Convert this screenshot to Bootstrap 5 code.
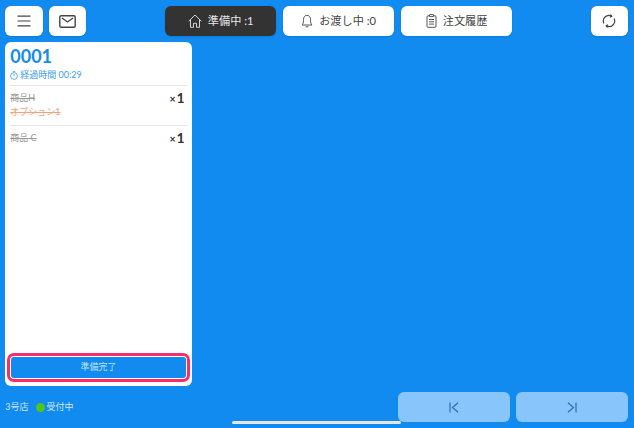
<!DOCTYPE html>
<html lang="ja">
<head>
<meta charset="utf-8">
<title>準備中</title>
<link href="https://cdn.jsdelivr.net/npm/bootstrap@5.3.0/dist/css/bootstrap.min.css" rel="stylesheet">
<style>
html,body{height:100%;}
body{background:#118bef;font-family:Lato,"Noto Sans CJK JP",sans-serif;overflow:hidden;color:#333;}
.screen{width:634px;height:428px;padding:6px 6px 6px 5.3px;position:relative;}
.topbar{height:30px;margin-bottom:6px;}
.tool{height:30px;border-radius:6px;background:#fff;color:#444;border:0;padding:0;font-size:11.2px;box-shadow:0 1px 2px rgba(0,0,0,.12);}
.tool-sq{width:37.400px;}
.tool-sq+.tool-sq{margin-left:6.300px;}
.tool-wide{width:111.700px;gap:6px;}
.tool-on{background:#333;color:#e8e8e8;}
.tabs{margin-left:78.400px;gap:6.300px;}
.ticket{width:186.400px;height:343.500px;border-radius:6px;background:#fff;padding:0 5px;}
.tno{color:#118bef;font-size:18px;font-weight:700;line-height:24px;padding-top:2px;height:26px;}
.elapsed{color:#3a9df0;font-size:9px;line-height:14px;padding-bottom:3px;height:17px;gap:2px;}
.line-item{border-top:1px solid #e6e6e6;padding:5px 2px 0 0;color:#999;font-size:9px;line-height:14px;height:39.500px;}
.opt{color:#f3a080;}
.qty{color:#333;font-size:14px;font-weight:700;line-height:14px;gap:1px;}
.qty-x{font-size:10.500px;}
.strike{text-decoration:line-through;}
.done-wrap{border:3px solid #fb2c6b;border-radius:7px;margin:0 -3.300px 4px -3.300px;padding:1px;}
.done{height:21px;display:block;background:#118bef;color:#bfe0fb;font-size:9px;border:0;border-radius:3px;padding:0;width:100%;}
.foot{height:30px;margin-top:6.500px;color:#cfe8fd;font-size:9px;}
.dot{width:9px;height:9px;border-radius:50%;background:#52c41a;margin-left:7px;margin-right:2px;}
.pager{width:112px;height:30px;border:0;padding:0;border-radius:6px;background:#88c5fa;color:#2f6ea6;}
.pagers{gap:6px;}
.homebar{position:absolute;left:232px;top:421px;width:169px;height:3px;border-radius:2px;background:#e6e6e6;}
</style>
</head>
<body>
<div class="screen">
  <div class="topbar d-flex align-items-center">
    <button class="tool tool-sq d-flex align-items-center justify-content-center" aria-label="メニュー">
      <svg width="14" height="12" viewBox="0 0 14 12" fill="none" stroke="#444" stroke-width="1.200"><path d="M.5 1.200h13M.5 6h13M.5 10.800h13"/></svg>
    </button>
    <button class="tool tool-sq d-flex align-items-center justify-content-center" aria-label="メール">
      <svg width="17" height="13" viewBox="0 0 17 13" fill="none" stroke="#444" stroke-width="1.400"><rect x=".8" y=".8" width="15.400" height="11.400" rx="1.300"/><path d="M3 3l5.500 4 5.500-4"/></svg>
    </button>
    <div class="tabs d-flex">
      <button class="tool tool-wide tool-on d-flex align-items-center justify-content-center">
        <svg width="14" height="14" viewBox="0 0 14 14" fill="none" stroke="#e8e8e8" stroke-width=".9" stroke-linejoin="round"><path d="M.7 7.300L7 1l6.300 6.300M2.500 5.800v7.500h3V9.300h3v4h3V5.800"/></svg>
        <span>準備中 :1</span>
      </button>
      <button class="tool tool-wide d-flex align-items-center justify-content-center">
        <svg width="12" height="14" viewBox="0 0 12 14" fill="none" stroke="#444" stroke-width=".9" stroke-linejoin="round"><path d="M1 11c1-1 1.500-2 1.500-5.500C2.500 3 4 1.300 6 1.300S9.500 3 9.500 5.500c0 3.500.5 4.500 1.500 5.500zM4.500 12.800h3"/></svg>
        <span>お渡し中 :0</span>
      </button>
      <button class="tool tool-wide d-flex align-items-center justify-content-center">
        <svg width="11" height="14" viewBox="0 0 11 14" fill="none" stroke="#444" stroke-width=".9"><rect x="1" y="1.800" width="9" height="11.500" rx="1"/><rect x="3.500" y=".6" width="4" height="2" rx=".5" fill="#fff"/><path d="M3 5.500h5M3 7.800h5M3 10.100h5"/></svg>
        <span>注文履歴</span>
      </button>
    </div>
    <button class="tool tool-sq ms-auto d-flex align-items-center justify-content-center" aria-label="更新">
      <svg width="14" height="14" viewBox="0 0 14 14" fill="none" stroke="#444" stroke-width="1.200"><path d="M2 9.500A5.500 5.500 0 0 1 9.500 2.100"/><path d="M12 4.500A5.500 5.500 0 0 1 4.500 11.900"/><path d="M8.500.5l1.300 1.700-1.900 1M5.500 13.500l-1.300-1.700 1.900-1"/></svg>
    </button>
  </div>

  <div class="ticket d-flex flex-column">
    <div class="tno">0001</div>
    <div class="elapsed d-flex align-items-center">
      <svg width="8" height="9" viewBox="0 0 8 9" fill="none" stroke="#3a9df0" stroke-width=".8"><circle cx="4" cy="5" r="3.400"/><path d="M4 3v2.200M2.800.6h2.400"/></svg>
      <span>経過時間 00:29</span>
    </div>
    <div class="line-item d-flex justify-content-between">
      <div><div class="strike">商品H</div><div class="opt strike">オプション1</div></div>
      <div class="qty d-flex align-items-baseline"><span class="qty-x">×</span><span>1</span></div>
    </div>
    <div class="line-item d-flex justify-content-between">
      <div class="strike">商品 C</div>
      <div class="qty d-flex align-items-baseline"><span class="qty-x">×</span><span>1</span></div>
    </div>
    <div class="done-wrap mt-auto"><button class="done">準備完了</button></div>
  </div>

  <div class="foot d-flex align-items-center">
    <span>3号店</span><span class="dot"></span><span>受付中</span>
    <div class="pagers ms-auto d-flex">
      <button class="pager d-flex align-items-center justify-content-center" aria-label="最初">
        <svg width="10" height="11" viewBox="0 0 10 11" fill="none" stroke="#2f6ea6" stroke-width="1.200"><path d="M1 .5v10M9 .8L3.500 5.500 9 10.200"/></svg>
      </button>
      <button class="pager d-flex align-items-center justify-content-center" aria-label="最後">
        <svg width="10" height="11" viewBox="0 0 10 11" fill="none" stroke="#2f6ea6" stroke-width="1.200"><path d="M9 .5v10M1 .8l5.500 4.700L1 10.200"/></svg>
      </button>
    </div>
  </div>
  <div class="homebar"></div>
</div>
<script src="https://cdn.jsdelivr.net/npm/bootstrap@5.3.0/dist/js/bootstrap.bundle.min.js"></script>
</body>
</html>
